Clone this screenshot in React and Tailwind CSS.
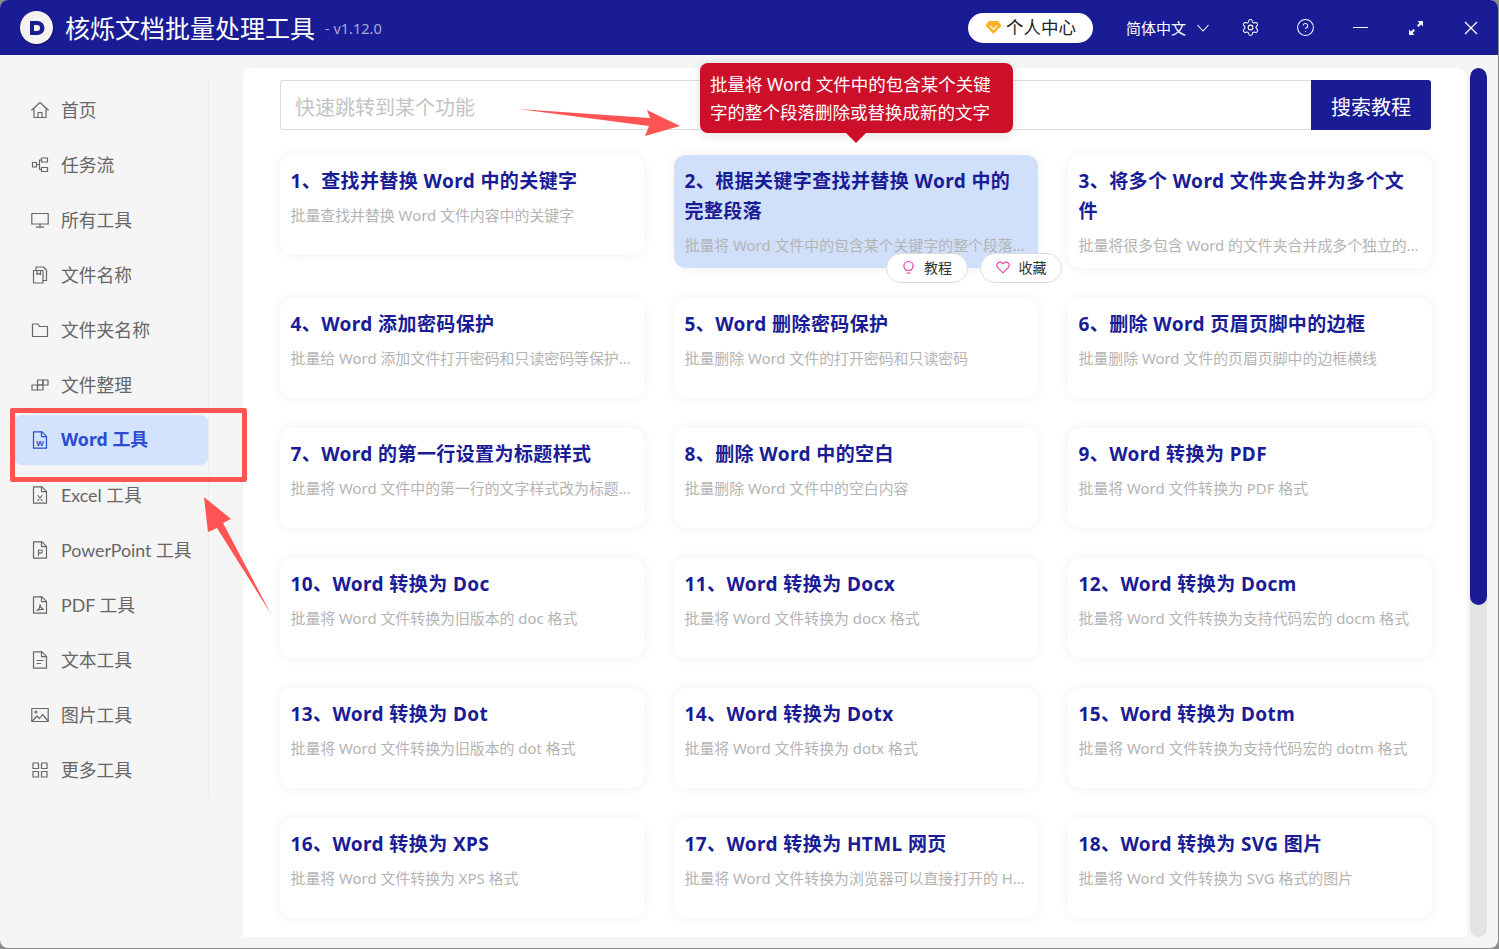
import React from "react";
import { Settings, CircleHelp } from "lucide-react";

const FONT = "font-['Noto_Sans','Noto_Sans_CJK_SC',sans-serif]";

const I = ({ children, className = "" }) => (
  <svg viewBox="0 0 18 18" fill="none" stroke="currentColor" strokeWidth="1.2" strokeLinejoin="round" strokeLinecap="round" className={"w-[18px] h-[18px] " + className}>{children}</svg>
);
const FileBase = ({ children }) => (
  <I>
    <path d="M2.500 .8h8.500l4.500 4.500v11.900h-13z" />
    <path d="M10.500 .8v4.800h5" />
    {children}
  </I>
);
const navItems = [
  ["首页", <I><path d="M.8 9 9 1.500 17.200 9" /><path d="M3 7.500v9h12v-9" /><path d="M7 16.500v-5h4v5" /></I>],
  ["任务流", <I><rect x="1.500" y="6.500" width="4" height="4.500" /><rect x="10.500" y="2" width="6" height="4" /><rect x="10.500" y="11.500" width="6" height="4" /><path d="M5.500 8.500h3M8.500 4v9.500h2M8.500 4h2" /></I>],
  ["所有工具", <I><rect x=".8" y="2.500" width="16.400" height="10.500" /><path d="M9 13v3M5.500 16.200h7" /></I>],
  ["文件名称", <I><path d="M2.500 4.500h9.500v12.500h-9.500z" /><path d="M5 4.500V1h7.500l3 3v10.500h-3.500" /><path d="M6 4.500v4l1.800-1 1.700 1v-4" /></I>],
  ["文件夹名称", <I><path d="M1.500 3h5.500l1.500 2.500h8v10h-15z" /></I>],
  ["文件整理", <I><rect x="1" y="9" width="5.500" height="5" /><rect x="6.500" y="9" width="5.500" height="5" /><rect x="6.500" y="4" width="5.500" height="5" /><rect x="12" y="4" width="5" height="5" /></I>],
  ["Word 工具", <FileBase><text x="9" y="14.500" fontSize="8" fontWeight="700" textAnchor="middle" stroke="none" fill="currentColor" fontFamily="Liberation Sans">W</text></FileBase>],
  ["Excel 工具", <FileBase><path d="m7 9.500 4 5M11 9.500l-4 5" /></FileBase>],
  ["PowerPoint 工具", <FileBase><path d="M7.500 14.500v-5.500h2.200a1.500 1.500 0 0 1 0 3.200H7.500" /></FileBase>],
  ["PDF 工具", <FileBase><path d="M6 14.500c2-1 3-3.500 3-6 .3 2.500 1.500 4 3.500 5-2-.3-4.500 0-6.500 1z" /></FileBase>],
  ["文本工具", <FileBase><path d="M6 9.500h6M6 12.500h3.500" /></FileBase>],
  ["图片工具", <I><rect x=".8" y="2.500" width="16.400" height="13" /><circle cx="5" cy="6" r="1" /><path d="m1.500 15 4.500-5 2.500 2.500 3-4 5 6" /></I>],
  ["更多工具", <I><rect x="2" y="2" width="5.500" height="5.500" /><rect x="10.500" y="2" width="5.500" height="5.500" /><rect x="2" y="10.500" width="5.500" height="5.500" /><rect x="10.500" y="10.500" width="5.500" height="5.500" /></I>],
];

const cards = [
  ["1、查找并替换 Word 中的关键字", "批量查找并替换 Word 文件内容中的关键字"],
  ["2、根据关键字查找并替换 Word 中的完整段落", "批量将 Word 文件中的包含某个关键字的整个段落删除或替换成新的文字"],
  ["3、将多个 Word 文件夹合并为多个文件", "批量将很多包含 Word 的文件夹合并成多个独立的文件夹并保存"],
  ["4、Word 添加密码保护", "批量给 Word 添加文件打开密码和只读密码等保护措施，防止他人查看"],
  ["5、Word 删除密码保护", "批量删除 Word 文件的打开密码和只读密码"],
  ["6、删除 Word 页眉页脚中的边框", "批量删除 Word 文件的页眉页脚中的边框横线"],
  ["7、Word 的第一行设置为标题样式", "批量将 Word 文件中的第一行的文字样式改为标题样式，方便生成目录"],
  ["8、删除 Word 中的空白", "批量删除 Word 文件中的空白内容"],
  ["9、Word 转换为 PDF", "批量将 Word 文件转换为 PDF 格式"],
  ["10、Word 转换为 Doc", "批量将 Word 文件转换为旧版本的 doc 格式"],
  ["11、Word 转换为 Docx", "批量将 Word 文件转换为 docx 格式"],
  ["12、Word 转换为 Docm", "批量将 Word 文件转换为支持代码宏的 docm 格式"],
  ["13、Word 转换为 Dot", "批量将 Word 文件转换为旧版本的 dot 格式"],
  ["14、Word 转换为 Dotx", "批量将 Word 文件转换为 dotx 格式"],
  ["15、Word 转换为 Dotm", "批量将 Word 文件转换为支持代码宏的 dotm 格式"],
  ["16、Word 转换为 XPS", "批量将 Word 文件转换为 XPS 格式"],
  ["17、Word 转换为 HTML 网页", "批量将 Word 文件转换为浏览器可以直接打开的 HTML 网页文件"],
  ["18、Word 转换为 SVG 图片", "批量将 Word 文件转换为 SVG 格式的图片"],
];

function Pill({ icon, label }) {
  return (
    <div className="w-[82px] h-[30px] rounded-full bg-white border border-[#dddddd] flex items-center justify-center gap-[9px] text-[14px] leading-[20px] pb-[1px] text-[#333333]">
      {icon}
      <span>{label}</span>
    </div>
  );
}

function Card({ title, desc, index }) {
  const active = index === 1;
  return (
    <div className={"relative min-h-[100px] rounded-xl pl-[10.500px] pr-[12px] pt-[10.500px] pb-[8px] shadow-[0_0_12px_rgba(0,0,0,0.06)] " + (active ? "bg-[#d0e0fb]" : "bg-white")}>
      <div className="text-[19px] leading-[30px] font-bold text-[#1a1c96] tracking-[0.4px]">{title}</div>
      <div className="mt-[4.500px] -mr-[3px] text-[14.900px] leading-[30px] text-[#b4b4b4] truncate">{desc}</div>
      {active && (
        <div className="absolute left-[212px] top-[98px] flex gap-[12px] z-10">
          <Pill label="教程" icon={
            <svg viewBox="0 0 14 16" className="w-[13px] h-[15px]" fill="none" stroke="#ee2a9d" strokeWidth="1.200"><path d="M4.500 11C3 9.800 2 8.300 2 6.500a5 5 0 0 1 10 0c0 1.800-1 3.300-2.500 4.500z" /><path d="M5 14h4" /></svg>
          } />
          <Pill label="收藏" icon={
            <svg viewBox="0 0 16 14" className="w-[14px] h-[13px]" fill="none" stroke="#ee2a9d" strokeWidth="1.200"><path d="M8 13 2 7a3.500 3.500 0 0 1 0-5 3.800 3.800 0 0 1 5.200 0L8 2.800 8.800 2a3.800 3.800 0 0 1 5.200 0 3.500 3.500 0 0 1 0 5z" /></svg>
          } />
        </div>
      )}
    </div>
  );
}

export default function App() {
  return (
    <div className={"relative w-[1499px] h-[949px] overflow-hidden bg-[#8c8c8c] " + FONT}>
      <div className="w-[1498px] h-[948px] rounded-lg overflow-hidden bg-[#f5f5f5] flex flex-col">
        <header className="h-[55px] shrink-0 bg-[#1a1c96] flex items-center text-white">
          <div className="ml-[20px] w-[33px] h-[33px] rounded-full bg-[#f4f1ee] flex items-center justify-center shadow-[1px_1px_2px_rgba(0,0,0,0.3)]">
            <svg viewBox="0 0 20 20" className="w-[20px] h-[20px]">
              <path fillRule="evenodd" fill="#1a1c96" d="M3 3h7.500a7 7 0 0 1 0 14H3zM7 7v6h3a3 3 0 0 0 0-6z" />
            </svg>
          </div>
          <div className="ml-[12px] text-[25px] leading-[34px]">核烁文档批量处理工具</div>
          <div className="ml-[10px] text-[14.500px] text-[#a9aad8] mt-[3px]">- v1.12.0</div>
          <div className="ml-auto w-[125px] h-[30px] rounded-full bg-white text-[#222222] text-[17.500px] flex items-center justify-center gap-[4px] mr-[33px]">
            <svg viewBox="0 0 18 16" className="w-[17px] h-[15px]"><path fill="#fdb022" d="M4 1h10l3.500 5L9 15 .5 6z" /><path d="m5 6 4 4 4-4" stroke="#fff" strokeWidth="1.500" fill="none" /></svg>
            <span>个人中心</span>
          </div>
          <div className="text-[15px] flex items-center gap-[11px] w-[84px] mt-[1px]">
            <span>简体中文</span>
            <svg viewBox="0 0 12 8" className="w-[12px] h-[8px]" fill="none" stroke="#fff" strokeWidth="1.100"><path d="m.5 1 5.500 6 5.500-6" /></svg>
          </div>
          <div className="w-[55px] ml-[13px] flex justify-center">
            <Settings size={19} strokeWidth={1.300} />
          </div>
          <div className="w-[55px] flex justify-center">
            <CircleHelp size={19} strokeWidth={1.300} />
          </div>
          <div className="w-[55px] flex justify-center">
            <div className="w-[15px] h-[1.500px] bg-white" />
          </div>
          <div className="w-[55px] flex justify-center">
            <svg viewBox="0 0 14 14" className="w-[14px] h-[14px]" fill="#fff"><path d="M8.500 0H14v5.500L12 3.500 9.500 6 8 4.500 10.500 2zM5.500 14H0V8.500L2 10.500 4.500 8 6 9.500 3.500 12z" /></svg>
          </div>
          <div className="w-[55px] flex justify-center">
            <svg viewBox="0 0 14 14" className="w-[14px] h-[14px]" fill="none" stroke="#fff" strokeWidth="1.300"><path d="m1 1 12 12M13 1 1 13" /></svg>
          </div>
        </header>

        <div className="flex-1 min-h-0 flex items-start">
          <aside className="mt-[25px] ml-[14px] w-[195px] h-[717px] border-r border-[#eeeeee] pt-[5px] flex flex-col gap-[5px] shrink-0">
            {navItems.map(([label, icon]) => {
              const active = label === "Word 工具";
              return (
                <div key={label} className={"h-[50px] shrink-0 rounded-lg flex items-center pl-[17px] " + (active ? "bg-[#d3e3fd] text-[#2b4bd3] font-bold" : "text-[#666666]")}>
                  <span className="w-[18px] flex justify-center">{icon}</span>
                  <span className={"ml-[12px] text-[17.800px] leading-none " + (active ? "font-['Noto_Sans','Noto_Sans_CJK_SC',sans-serif]" : "font-['Lato','Noto_Sans_CJK_SC',sans-serif] mt-[1px]")}>{label}</span>
                </div>
              );
            })}
          </aside>

          <main className="ml-[34px] mt-[13px] w-[1224px] h-[869px] bg-white rounded-t-[10px] overflow-hidden pl-[37px] pr-[35px] pt-[12px] shrink-0">
            <div className="flex h-[50px] mr-[1px]">
              <div className="flex-1 border border-[#dcdcdc] border-r-0 rounded-l-[3px] flex items-center pl-[14px] pt-[5px] text-[20px] text-[#c4c4c4]">快速跳转到某个功能</div>
              <div className="w-[120px] bg-[#1a1c96] text-white text-[20px] pt-[5px] flex items-center justify-center rounded-r-[3px]">搜索教程</div>
            </div>
            <div className="mt-[25px] grid grid-cols-3 gap-[30px] items-start">
              {cards.map(([t, d], i) => <Card key={t} title={t} desc={d} index={i} />)}
            </div>
          </main>

          <div className="ml-[3px] mt-[13px] w-[17px] h-[869px] rounded-full bg-[#e3e3e3] overflow-hidden shrink-0">
            <div className="h-[537px] rounded-full bg-[#1a1c96]" />
          </div>
        </div>
      </div>

      {/* annotations */}
      <div className="absolute left-[700px] top-[63px] w-[313px] h-[70px] rounded-lg bg-[#cd1029] text-white text-[17.500px] leading-[28px] pl-[10px] pr-[6px] py-[7px] shadow-[0_2px_12px_rgba(0,0,0,0.12)]">
        批量将 Word 文件中的包含某个关键字的整个段落删除或替换成新的文字
      </div>
      <div className="absolute left-[846px] top-[133px] w-0 h-0 border-x-[10px] border-x-transparent border-t-[10px] border-t-[#cd1029]" />
      <div className="absolute left-[10px] top-[408px] w-[237px] h-[74px] border-[5px] border-[#ff5454] rounded-[2px]" />
      <svg className="absolute left-0 top-0 w-[1499px] h-[949px] pointer-events-none" viewBox="0 0 1499 949">
        <polygon fill="#ff5454" points="518,109 650,118 647,110 680,126 645,136 649,126" />
        <polygon fill="#ff5454" points="204,497 231,519 223,523 271,614 217,528 208,532" />
      </svg>
    </div>
  );
}
